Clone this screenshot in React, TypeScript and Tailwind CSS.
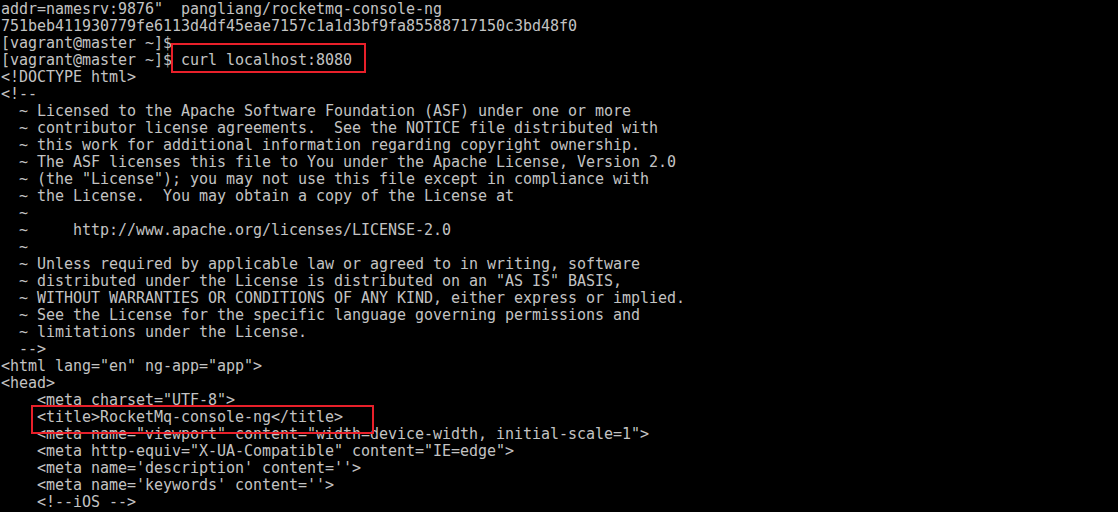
import React from "react";

const lines: string[] = [
  'addr=namesrv:9876"  pangliang/rocketmq-console-ng',
  "751beb411930779fe6113d4df45eae7157c1a1d3bf9fa85588717150c3bd48f0",
  "[vagrant@master ~]$",
  "[vagrant@master ~]$ curl localhost:8080",
  "<!DOCTYPE html>",
  "<!--",
  "  ~ Licensed to the Apache Software Foundation (ASF) under one or more",
  "  ~ contributor license agreements.  See the NOTICE file distributed with",
  "  ~ this work for additional information regarding copyright ownership.",
  "  ~ The ASF licenses this file to You under the Apache License, Version 2.0",
  '  ~ (the "License"); you may not use this file except in compliance with',
  "  ~ the License.  You may obtain a copy of the License at",
  "  ~",
  "  ~     http://www.apache.org/licenses/LICENSE-2.0",
  "  ~",
  "  ~ Unless required by applicable law or agreed to in writing, software",
  '  ~ distributed under the License is distributed on an "AS IS" BASIS,',
  "  ~ WITHOUT WARRANTIES OR CONDITIONS OF ANY KIND, either express or implied.",
  "  ~ See the License for the specific language governing permissions and",
  "  ~ limitations under the License.",
  "  -->",
  '<html lang="en" ng-app="app">',
  "<head>",
  '    <meta charset="UTF-8">',
  "    <title>RocketMq-console-ng</title>",
  '    <meta name="viewport" content="width=device-width, initial-scale=1">',
  '    <meta http-equiv="X-UA-Compatible" content="IE=edge">',
  "    <meta name='description' content=''>",
  "    <meta name='keywords' content=''>",
  "    <!--iOS -->",
];

export default function App() {
  return (
    <div className="relative w-[1118px] h-[512px] overflow-hidden bg-black">
      <div
        className="pl-[1px] pt-[1px] text-[15px] leading-[17px] tracking-[-0.03px] text-[#c3c3c3] whitespace-pre"
        style={{ fontFamily: '"DejaVu Sans Mono", "Liberation Mono", monospace' }}
      >
        {lines.map((l, i) => (
          <div key={i} className="h-[17px]">
            {l}
          </div>
        ))}
      </div>
      <div className="absolute left-[171px] top-[43px] w-[195px] h-[30px] border-2 border-[#e8202a]" />
      <div className="absolute left-[31px] top-[405px] w-[343px] h-[29px] border-2 border-[#e8202a]" />
    </div>
  );
}
